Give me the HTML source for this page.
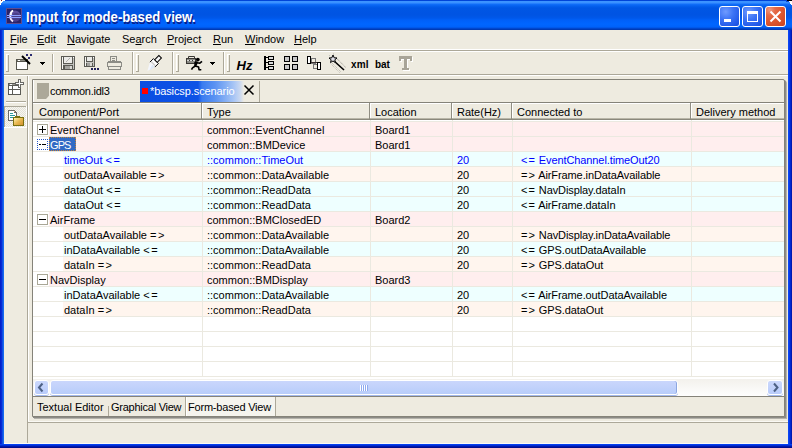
<!DOCTYPE html>
<html><head><meta charset="utf-8">
<style>
*{box-sizing:border-box;margin:0;padding:0}
html,body{width:792px;height:448px;overflow:hidden;background:#eeebe0}
body{position:relative;font-family:"Liberation Sans",sans-serif;font-size:11px;color:#000}
.a{position:absolute}
.t{position:absolute;white-space:pre;line-height:13px}
/* title bar */
#title{left:0;top:0;width:792px;height:30px;
 background:linear-gradient(to bottom,#0044d8 0px,#0044d8 1px,#3d94ff 1px,#3a90ff 3px,#126ffa 4px,#0560ee 6px,#0056e4 8px,#0054e3 15px,#0058ea 18px,#0060f8 20px,#0066ff 24px,#0062fa 27px,#0050dc 28px,#003ec0 29px,#0036a8 30px)}
#ttext{left:26px;top:9px;color:#fff;font-weight:bold;font-size:13px;line-height:16px;text-shadow:1px 1px 0 #0a1e8a;transform:scale(1.01,1.12);transform-origin:0 0}
.wb{position:absolute;top:6px;width:21px;height:21px;border:1px solid #fff;border-radius:3px;
 background:radial-gradient(circle at 30% 25%,#6f9bff 0,#3d74f5 40%,#2158e8 80%,#1a4fd8 100%)}
.frameL{left:0;top:30px;width:4px;height:418px;background:linear-gradient(to right,#0019c6,#0831d9 2px,#166aee 3px)}
.frameR{left:788px;top:30px;width:4px;height:418px;background:linear-gradient(to right,#0a4af6 0,#0a40f0 1px,#0030e0 2px,#0020c0 3px,#0010a0 4px)}
.frameB{left:0;top:444px;width:792px;height:4px;background:linear-gradient(to bottom,#0a48f8 0,#0038e8 1px,#0020c0 2px,#00109a 3px,#000880 4px)}
/* menu */
.mi{position:absolute;top:33px;white-space:pre;line-height:13px}
.u{text-decoration:underline}
/* table */
.hd{position:absolute;top:106px;height:13px;line-height:13px;padding-left:6px;white-space:pre}
.row{position:absolute;left:33px;width:752px;height:15px}
.cell{position:absolute;top:1px;white-space:pre;line-height:13px}
.vl{position:absolute;top:120px;width:1px;height:259px;background:#ebe9e0}
</style></head>
<body>
<!-- Title bar -->
<div id="title" class="a"></div>
<div class="a" style="left:0;top:0;width:5px;height:1px;background:#fff"></div>
<div class="a" style="left:1px;top:0;width:1px;height:1px;background:#802020"></div>
<div class="a" style="left:0;top:1px;width:3px;height:1px;background:#fff"></div>
<div class="a" style="left:0;top:2px;width:2px;height:1px;background:#fff"></div>
<div class="a" style="left:0;top:3px;width:1px;height:2px;background:#fff"></div>
<div class="a" style="left:787px;top:0;width:5px;height:1px;background:#000"></div>
<div class="a" style="left:789px;top:1px;width:3px;height:1px;background:#fff"></div>
<div class="a" style="left:790px;top:2px;width:2px;height:2px;background:#fff"></div>
<div class="a" style="left:791px;top:4px;width:1px;height:1px;background:#fff"></div>
<div class="a" style="left:786px;top:1px;width:3px;height:1px;background:#0a4ad8"></div>
<!-- app icon -->
<svg class="a" style="left:6px;top:8px" width="16" height="16" viewBox="0 0 16 16">
 <rect x="0" y="0" width="16" height="16" fill="#3c3478"/>
 <rect x="0.5" y="0.5" width="15" height="15" fill="#2a2268" stroke="#5c4c90" stroke-width="1"/>
 <circle cx="9" cy="8" r="5.5" fill="#5e4e9c"/>
 <circle cx="10" cy="9" r="4" fill="#4a3c86"/>
 <path d="M7 2.5 C3.5 4 3 11 7 13.5" stroke="#f4e8ff" stroke-width="1.8" fill="none"/>
 <path d="M7 2.5 C5 4 4.5 6 5 8" stroke="#ffffff" stroke-width="1.4" fill="none"/>
 <rect x="1" y="7" width="14" height="1" fill="#8ea0ff"/>
 <rect x="1" y="9" width="14" height="1" fill="#8ea0ff"/>
</svg>
<div id="ttext" class="t">Input for mode-based view.</div>
<!-- window buttons -->
<div class="wb" style="left:719px"><div class="a" style="left:4px;top:12px;width:7px;height:3px;background:#fff"></div></div>
<div class="wb" style="left:742px"><div class="a" style="left:4px;top:4px;width:11px;height:11px;border:1px solid #fff;border-top-width:3px"></div></div>
<div class="wb" style="left:765px;background:radial-gradient(circle at 20% 15%,#f09a80 0,#e46a46 25%,#e05a32 50%,#d04a24 85%,#c04020 100%)">
 <svg class="a" style="left:0;top:0" width="19" height="19" viewBox="0 0 19 19"><path d="M4.5 4.5L14.5 14.5M14.5 4.5L4.5 14.5" stroke="#fff" stroke-width="2"/></svg>
</div>
<div class="a frameL"></div>
<div class="a frameR"></div>
<div class="a frameB"></div>

<!-- Menu bar -->
<div class="mi" style="left:10px"><span class="u">F</span>ile</div>
<div class="mi" style="left:37px"><span class="u">E</span>dit</div>
<div class="mi" style="left:67px"><span class="u">N</span>avigate</div>
<div class="mi" style="left:122px">Se<span class="u">a</span>rch</div>
<div class="mi" style="left:167px"><span class="u">P</span>roject</div>
<div class="mi" style="left:213px"><span class="u">R</span>un</div>
<div class="mi" style="left:245px"><span class="u">W</span>indow</div>
<div class="mi" style="left:294px"><span class="u">H</span>elp</div>
<div class="a" style="left:4px;top:49px;width:784px;height:1px;background:#fff"></div>
<div class="a" style="left:4px;top:50px;width:784px;height:1px;background:#aca899"></div>
<div class="a" style="left:4px;top:51px;width:784px;height:1px;background:#fff"></div>

<!-- toolbar -->
<div class="a" style="left:4px;top:74px;width:784px;height:1px;background:#aca899"></div>
<div class="a" style="left:4px;top:75px;width:784px;height:1px;background:#fff"></div>
<!--TOOLBAR-->
<svg class="a" style="left:0;top:0" width="792" height="80" viewBox="0 0 792 80">
 <g shape-rendering="crispEdges">
  <!-- handles -->
  <rect x="6" y="54" width="1" height="18" fill="#fff"/><rect x="6" y="54" width="3" height="1" fill="#fff"/><rect x="8" y="55" width="1" height="17" fill="#aca899"/><rect x="6" y="71" width="3" height="1" fill="#aca899"/>
  <rect x="136" y="54" width="1" height="18" fill="#fff"/><rect x="136" y="54" width="3" height="1" fill="#fff"/><rect x="138" y="55" width="1" height="17" fill="#aca899"/><rect x="136" y="71" width="3" height="1" fill="#aca899"/>
  <rect x="176" y="54" width="1" height="18" fill="#fff"/><rect x="176" y="54" width="3" height="1" fill="#fff"/><rect x="178" y="55" width="1" height="17" fill="#aca899"/><rect x="176" y="71" width="3" height="1" fill="#aca899"/>
  <rect x="227" y="54" width="1" height="18" fill="#fff"/><rect x="227" y="54" width="3" height="1" fill="#fff"/><rect x="229" y="55" width="1" height="17" fill="#aca899"/><rect x="227" y="71" width="3" height="1" fill="#aca899"/>
  <!-- coolbar separators -->
  <rect x="132" y="52" width="1" height="22" fill="#aca899"/><rect x="133" y="52" width="1" height="22" fill="#fff"/>
  <rect x="172" y="52" width="1" height="22" fill="#aca899"/><rect x="173" y="52" width="1" height="22" fill="#fff"/>
  <rect x="223" y="52" width="1" height="22" fill="#aca899"/><rect x="224" y="52" width="1" height="22" fill="#fff"/>
  <!-- toolbar sep -->
  <rect x="52" y="54" width="1" height="18" fill="#aca899"/><rect x="53" y="54" width="1" height="18" fill="#fff"/>
  <!-- new wizard -->
  <rect x="16" y="59" width="12" height="11" fill="#55554c"/>
  <rect x="17" y="62" width="10" height="7" fill="#fff"/>
  <rect x="17" y="60" width="10" height="1" fill="#8a8a80"/>
  <rect x="18" y="60" width="2" height="1" fill="#fff"/>
  <rect x="26" y="54" width="2" height="2" fill="#2a2a70"/><rect x="30" y="54" width="2" height="2" fill="#2a2a70"/><rect x="28" y="57" width="2" height="2" fill="#2a2a70"/>
  <!-- dropdown arrows -->
  <path d="M40 62h5v1h-1v1h-1v1h-1v-1h-1v-1h-1z" fill="#000"/>
  <path d="M210 62h5v1h-1v1h-1v1h-1v-1h-1v-1h-1z" fill="#000"/>
  <!-- save -->
  <rect x="61" y="56" width="14" height="14" fill="#5a5a54"/>
  <rect x="62" y="57" width="1" height="12" fill="#f8f8f4"/>
  <rect x="64" y="57" width="8" height="6" fill="#ebebe8"/>
  <rect x="66" y="61" width="1" height="1" fill="#b0b0ac"/><rect x="67" y="60" width="1" height="1" fill="#b0b0ac"/><rect x="68" y="59" width="1" height="1" fill="#b0b0ac"/><rect x="69" y="58" width="1" height="1" fill="#b0b0ac"/>
  <rect x="73" y="58" width="1" height="11" fill="#c4c4c0"/>
  <rect x="73" y="57" width="1" height="1" fill="#fff"/>
  <rect x="63" y="64" width="10" height="1" fill="#c4c4c0"/>
  <rect x="65" y="66" width="5" height="3" fill="#a4a4a0"/>
  <rect x="70" y="66" width="2" height="3" fill="#d8d8d4"/>
  <!-- save all -->
  <rect x="84" y="56" width="11" height="11" fill="#5a5a54"/>
  <rect x="85" y="57" width="1" height="9" fill="#f8f8f4"/>
  <rect x="87" y="57" width="5" height="4" fill="#ebebe8"/>
  <rect x="93" y="58" width="1" height="8" fill="#c4c4c0"/>
  <rect x="93" y="57" width="1" height="1" fill="#fff"/>
  <rect x="86" y="62" width="7" height="1" fill="#c4c4c0"/>
  <rect x="87" y="63" width="3" height="3" fill="#a4a4a0"/><rect x="90" y="63" width="2" height="3" fill="#d8d8d4"/>
  <rect x="91" y="68" width="2" height="2" fill="#22225a"/><rect x="94" y="68" width="2" height="2" fill="#22225a"/><rect x="97" y="68" width="2" height="2" fill="#22225a"/>
  <!-- print -->
  <rect x="110" y="56" width="7" height="1" fill="#8c8c86"/><rect x="110" y="56" width="1" height="6" fill="#8c8c86"/><rect x="116" y="57" width="1" height="5" fill="#8c8c86"/>
  <rect x="112" y="58" width="3" height="1" fill="#8c8c86"/><rect x="112" y="60" width="3" height="1" fill="#8c8c86"/>
  <rect x="108" y="61" width="13" height="1" fill="#8c8c86"/>
  <rect x="107" y="62" width="15" height="1" fill="#8c8c86"/><rect x="107" y="62" width="1" height="5" fill="#8c8c86"/><rect x="121" y="62" width="1" height="5" fill="#8c8c86"/>
  <rect x="107" y="66" width="15" height="1" fill="#8c8c86"/>
  <rect x="108" y="67" width="1" height="3" fill="#8c8c86"/><rect x="120" y="67" width="1" height="3" fill="#8c8c86"/><rect x="108" y="69" width="13" height="1" fill="#8c8c86"/>
  <!-- tree icon -->
  <rect x="264" y="56" width="2" height="14" fill="#000"/>
  <rect x="266" y="57" width="2" height="1" fill="#000"/><rect x="266" y="62" width="2" height="1" fill="#000"/><rect x="266" y="67" width="2" height="1" fill="#000"/>
  <rect x="268" y="56" width="6" height="4" fill="#000"/><rect x="269" y="57" width="4" height="2" fill="#ddd"/>
  <rect x="268" y="61" width="6" height="4" fill="#000"/><rect x="269" y="62" width="4" height="2" fill="#ddd"/>
  <rect x="268" y="66" width="6" height="4" fill="#000"/><rect x="269" y="67" width="4" height="2" fill="#ddd"/>
  <!-- grid icon -->
  <rect x="284" y="56" width="6" height="6" fill="#000"/><rect x="285" y="57" width="4" height="4" fill="#c8c8c8"/>
  <rect x="292" y="56" width="6" height="6" fill="#000"/><rect x="293" y="57" width="4" height="4" fill="#c8c8c8"/>
  <rect x="284" y="64" width="6" height="6" fill="#000"/><rect x="285" y="65" width="4" height="4" fill="#c8c8c8"/>
  <rect x="292" y="64" width="6" height="6" fill="#000"/><rect x="293" y="65" width="4" height="4" fill="#c8c8c8"/>
  <!-- diagram icon -->
  <rect x="311" y="58" width="4" height="5" fill="none" stroke="#777" stroke-width="1"/>
  <rect x="313" y="64" width="4" height="4" fill="none" stroke="#777" stroke-width="1"/>
  <rect x="310" y="62" width="8" height="1" fill="#3a3030"/>
  <rect x="307" y="56" width="4" height="8" fill="#000"/><rect x="308" y="57" width="2" height="6" fill="#fff"/>
  <rect x="317" y="62" width="4" height="8" fill="#000"/><rect x="318" y="63" width="2" height="6" fill="#fff"/>
 </g>
 <!-- pen -->
 <g transform="translate(154.5 62.5) rotate(-45)">
  <path d="M-11 1 L-3 -3.5 L-3 3.5 Z" fill="#f4f6fc"/>
  <path d="M-9 2 L-3 0 L-3 3.5 Z" fill="#dde7f6"/>
  <path d="M-3 -3.5 H2 V3.5 H-3" fill="#fff" stroke="#000" stroke-width="0.9"/>
  <rect x="-2.5" y="-3" width="1.5" height="6" fill="#d0d0d0"/>
  <rect x="2" y="-1.8" width="6" height="3.6" fill="#f4f4f4" stroke="#000" stroke-width="1"/>
 </g>
 <!-- wand on new -->
 <path d="M22 56 L30 64" stroke="#000" stroke-width="2"/>
 <!-- runner -->
 <rect x="186.5" y="58.5" width="9" height="5" fill="#8a8a84" stroke="#3a3834" stroke-width="1"/>
 <path d="M188.5 58.5 V56.5 H194.5 V58.5" fill="none" stroke="#3a3834" stroke-width="1"/>
 <rect x="187" y="60" width="8" height="1" fill="#d8d8d4"/>
 <rect x="189" y="60" width="1" height="1" fill="#333"/><rect x="192" y="60" width="1" height="1" fill="#333"/>
 <circle cx="197.8" cy="59.6" r="1.9" fill="#000"/>
 <path d="M197 61.5 L195 66" stroke="#000" stroke-width="2.6" fill="none"/>
 <path d="M195.3 66 L192.5 67.8 L191.5 69.6 M195.3 66 L198.6 67 L199 69.6 L201.3 69.8 M197 62.8 L199.8 63.2 L202 61.3 M196.6 62.3 L194.3 63" stroke="#000" stroke-width="1.6" fill="none" stroke-linejoin="round"/>
 <!-- Hz -->
 <text x="236.5" y="69.5" font-family="Liberation Sans" font-weight="bold" font-style="italic" font-size="13" fill="#000" letter-spacing="0">Hz</text>
 <!-- magic wand -->
 <path d="M330.5 63.5 L339.5 72.5 M332 63 L341 72 M337 59 L346 68 M336 57.5 L345 66.5 M329 56 L330 55 M333 54 L335 54" stroke="#b4b2aa" stroke-width="1" stroke-dasharray="1 1"/>
 <path d="M333.5 60.5 L344 70" stroke="#000" stroke-width="1.6"/>
 <path d="M333 55 L334.2 57.8 L337 58 L334.8 59.8 L335.5 62.5 L333 61 L330.5 62.5 L331.2 59.8 L329 58 L331.8 57.8 Z" fill="#e0e0e8" stroke="#000" stroke-width="1"/>
 <!-- xml bat -->
 <text x="351" y="67.5" font-family="Liberation Sans" font-weight="bold" font-size="10" fill="#000" letter-spacing="0.2">xml</text>
 <text x="375" y="67.5" font-family="Liberation Sans" font-weight="bold" font-size="10" fill="#000" letter-spacing="-0.1">bat</text>
 <!-- T -->
 <path d="M400 57h13v5h-2v-2h-3v9h2v2h-7v-2h2v-9h-3v2h-2z" fill="#fff" shape-rendering="crispEdges"/>
 <path d="M399 56h13v5h-2v-2h-3v9h2v2h-7v-2h2v-9h-3v2h-2z" fill="#a8a498" shape-rendering="crispEdges"/>
</svg>

<!--/TOOLBAR-->

<!-- left trim -->
<div class="a" style="left:27px;top:76px;width:1px;height:367px;background:#aca899"></div>
<div class="a" style="left:28px;top:76px;width:1px;height:346px;background:#fff"></div>
<!--TRIM-->
<svg class="a" style="left:0;top:0" width="30" height="130" viewBox="0 0 30 130">
 <defs>
  <pattern id="chk" width="2" height="2" patternUnits="userSpaceOnUse"><rect width="2" height="2" fill="#f7f6f1"/><rect width="1" height="1" fill="#e4e2d8"/><rect x="1" y="1" width="1" height="1" fill="#e4e2d8"/></pattern>
  <linearGradient id="fold" x1="0" y1="0" x2="1" y2="1"><stop offset="0" stop-color="#fff2b0"/><stop offset="0.5" stop-color="#e8b850"/><stop offset="1" stop-color="#d09030"/></linearGradient>
 </defs>
 <g shape-rendering="crispEdges">
  <!-- icon 1 -->
  <rect x="8" y="83" width="13" height="12" fill="#5a5a55"/>
  <rect x="9" y="86" width="11" height="8" fill="#fff"/>
  <rect x="9" y="84" width="11" height="1" fill="#9a9a94"/><rect x="10" y="84" width="2" height="1" fill="#fff"/>
  <rect x="12" y="86" width="1" height="8" fill="#5a5a55"/>
  <rect x="9" y="89" width="11" height="1" fill="#5a5a55"/>
  <rect x="18" y="79" width="3" height="9" fill="#6a6a66"/><rect x="15" y="82" width="9" height="3" fill="#6a6a66"/>
  <rect x="19" y="80" width="1" height="7" fill="#fff"/><rect x="16" y="83" width="7" height="1" fill="#fff"/>
  <!-- separator -->
  <rect x="6" y="101" width="20" height="1" fill="#aca899"/><rect x="6" y="102" width="20" height="1" fill="#fff"/>
  <!-- pressed toggle -->
  <rect x="5" y="106" width="21" height="21" fill="url(#chk)"/>
  <rect x="4" y="106" width="22" height="1" fill="#aca899"/><rect x="4" y="106" width="1" height="21" fill="#aca899"/>
  <rect x="26" y="106" width="1" height="21" fill="#fff"/><rect x="4" y="127" width="23" height="1" fill="#fff"/>
  <!-- doc -->
  <path d="M8 110h6l3 3v8h-9z" fill="#6a6a66"/>
  <path d="M9 111h5v2h2v7h-7z" fill="#fff"/>
  <rect x="14" y="111" width="1" height="1" fill="#f0c080"/>
  <rect x="10" y="113" width="3" height="1" fill="#2a9a9a"/><rect x="10" y="115" width="5" height="1" fill="#2a9a9a"/><rect x="10" y="117" width="4" height="1" fill="#2a9a9a"/>
  <!-- folder -->
  <rect x="13" y="117" width="11" height="9" fill="#7a7010"/>
  <rect x="15" y="116" width="5" height="2" fill="#7a7010"/>
  <rect x="14" y="118" width="9" height="7" fill="url(#fold)"/>
 </g>
</svg>

<!--/TRIM-->

<!-- editor pane -->
<div class="a" style="left:32px;top:79px;width:753px;height:338px;border:1px solid #858379;background:#eeebe0;box-shadow:1px 1px 0 #8c8b86,2px 2px 0 #b4b2aa;border-radius:0 2px 0 0"></div>
<div class="a" style="left:33px;top:80px;width:1px;height:22px;background:#fff"></div>
<!-- tabs -->
<div class="a" style="left:33px;top:102px;width:751px;height:1px;background:#858379"></div>
<div class="a" style="left:37px;top:83px;width:12px;height:16px;background:#aca899;clip-path:polygon(0 0,100% 0,100% 80%,75% 100%,0 100%)"></div>
<div class="t" style="left:50px;top:85px;letter-spacing:-0.25px">common.idl3</div>
<div class="a" style="left:259px;top:81px;width:1px;height:21px;background:#aca899"></div>
<div class="a" style="left:140px;top:81px;width:119px;height:21px;background:linear-gradient(to right,#0a4ee2 0,#0d52e6 58px,#3a7cf0 62px,#5b93f2 75px,#86b0f4 86px,#a9c6f5 94px,#cad8f0 100px,#e4e6e6 103px,#eeebe0 104px)"></div>
<div class="a" style="left:142px;top:88px;width:6px;height:6px;background:#f00"></div>
<div class="t" style="left:150px;top:85px;color:#fff;letter-spacing:-0.1px">*basicsp.scenario</div>
<svg class="a" style="left:243px;top:84px" width="12" height="12" viewBox="0 0 12 12"><path d="M1.5 1.5L10.5 10.5M10.5 1.5L1.5 10.5" stroke="#000" stroke-width="1.5"/></svg>

<!-- table -->
<div class="a" style="left:33px;top:103px;width:751px;height:277px;background:#fff"></div>
<div class="a" style="left:33px;top:103px;width:751px;height:17px;background:#eeebe0;border-top:1px solid #fff;border-bottom:2px solid #8a887c"></div>
<div class="a" style="left:33px;top:118px;width:751px;height:1px;background:#b9b6a8"></div>
<div class="hd" style="left:33px">Component/Port</div>
<div class="hd" style="left:201px">Type</div>
<div class="hd" style="left:369px">Location</div>
<div class="hd" style="left:451px">Rate(Hz)</div>
<div class="hd" style="left:511px">Connected to</div>
<div class="hd" style="left:690px">Delivery method</div>
<div class="a" style="left:201px;top:103px;width:1px;height:16px;background:#8f8d82"></div><div class="a" style="left:202px;top:104px;width:1px;height:14px;background:#fff"></div>
<div class="a" style="left:369px;top:103px;width:1px;height:16px;background:#8f8d82"></div><div class="a" style="left:370px;top:104px;width:1px;height:14px;background:#fff"></div>
<div class="a" style="left:451px;top:103px;width:1px;height:16px;background:#8f8d82"></div><div class="a" style="left:452px;top:104px;width:1px;height:14px;background:#fff"></div>
<div class="a" style="left:511px;top:103px;width:1px;height:16px;background:#8f8d82"></div><div class="a" style="left:512px;top:104px;width:1px;height:14px;background:#fff"></div>
<div class="a" style="left:690px;top:103px;width:1px;height:16px;background:#8f8d82"></div><div class="a" style="left:691px;top:104px;width:1px;height:14px;background:#fff"></div>
<!--ROWS-->
<div class="a" style="left:49px;top:122px;width:735px;height:14px;background:#ffeeee"></div>
<div class="cell" style="left:50px;top:124px;color:#000">EventChannel</div>
<div class="a" style="left:37px;top:124px;width:11px;height:11px;border:1px solid #a9a796;background:#fff"></div>
<div class="a" style="left:39px;top:129px;width:7px;height:1px;background:#000"></div>
<div class="a" style="left:42px;top:126px;width:1px;height:7px;background:#000"></div>
<div class="cell" style="left:207px;top:124px;color:#000">common::EventChannel</div>
<div class="cell" style="left:375px;top:124px;color:#000">Board1</div>
<div class="a" style="left:49px;top:137px;width:735px;height:14px;background:#ffeeee"></div>
<div class="a" style="left:49px;top:137px;width:27px;height:14px;background:#316ac5;outline:1px dotted #c08040;outline-offset:-1px"></div>
<div class="cell" style="left:50px;top:139px;color:#fff;letter-spacing:-0.9px">GPS</div>
<div class="a" style="left:37px;top:139px;width:11px;height:11px;border:1px dotted #2858c8;background:#fff"></div>
<div class="a" style="left:39px;top:144px;width:7px;height:1px;background:repeating-linear-gradient(to right,#000 0,#000 2px,#fff 2px,#fff 2.5px)"></div>
<div class="cell" style="left:207px;top:139px;color:#000">common::BMDevice</div>
<div class="cell" style="left:375px;top:139px;color:#000">Board1</div>
<div class="a" style="left:63px;top:152px;width:721px;height:14px;background:#eeffff"></div>
<div class="cell" style="left:64px;top:154px;color:#0000ff">timeOut <span style="letter-spacing:1.5px">&lt;=</span></div>
<div class="cell" style="left:207px;top:154px;color:#0000ff">::common::TimeOut</div>
<div class="cell" style="left:457px;top:154px;color:#0000ff">20</div>
<div class="cell" style="left:521px;top:154px;color:#0000ff"><span style="letter-spacing:1px">&lt;=</span><span style="letter-spacing:-0.1px"> EventChannel.timeOut20</span></div>
<div class="a" style="left:63px;top:167px;width:721px;height:14px;background:#fff5ee"></div>
<div class="cell" style="left:64px;top:169px;color:#000">outDataAvailable <span style="letter-spacing:1.5px">=&gt;</span></div>
<div class="cell" style="left:207px;top:169px;color:#000">::common::DataAvailable</div>
<div class="cell" style="left:457px;top:169px;color:#000">20</div>
<div class="cell" style="left:521px;top:169px;color:#000"><span style="letter-spacing:1px">=&gt;</span><span style="letter-spacing:-0.1px"> AirFrame.inDataAvailable</span></div>
<div class="a" style="left:63px;top:182px;width:721px;height:14px;background:#eeffff"></div>
<div class="cell" style="left:64px;top:184px;color:#000">dataOut <span style="letter-spacing:1.5px">&lt;=</span></div>
<div class="cell" style="left:207px;top:184px;color:#000">::common::ReadData</div>
<div class="cell" style="left:457px;top:184px;color:#000">20</div>
<div class="cell" style="left:521px;top:184px;color:#000"><span style="letter-spacing:1px">&lt;=</span><span style="letter-spacing:-0.1px"> NavDisplay.dataIn</span></div>
<div class="a" style="left:63px;top:197px;width:721px;height:14px;background:#eeffff"></div>
<div class="cell" style="left:64px;top:199px;color:#000">dataOut <span style="letter-spacing:1.5px">&lt;=</span></div>
<div class="cell" style="left:207px;top:199px;color:#000">::common::ReadData</div>
<div class="cell" style="left:457px;top:199px;color:#000">20</div>
<div class="cell" style="left:521px;top:199px;color:#000"><span style="letter-spacing:1px">&lt;=</span><span style="letter-spacing:-0.1px"> AirFrame.dataIn</span></div>
<div class="a" style="left:49px;top:212px;width:735px;height:14px;background:#ffeeee"></div>
<div class="cell" style="left:50px;top:214px;color:#000">AirFrame</div>
<div class="a" style="left:37px;top:214px;width:11px;height:11px;border:1px solid #a9a796;background:#fff"></div>
<div class="a" style="left:39px;top:219px;width:7px;height:1px;background:#000"></div>
<div class="cell" style="left:207px;top:214px;color:#000">common::BMClosedED</div>
<div class="cell" style="left:375px;top:214px;color:#000">Board2</div>
<div class="a" style="left:63px;top:227px;width:721px;height:14px;background:#fff5ee"></div>
<div class="cell" style="left:64px;top:229px;color:#000">outDataAvailable <span style="letter-spacing:1.5px">=&gt;</span></div>
<div class="cell" style="left:207px;top:229px;color:#000">::common::DataAvailable</div>
<div class="cell" style="left:457px;top:229px;color:#000">20</div>
<div class="cell" style="left:521px;top:229px;color:#000"><span style="letter-spacing:1px">=&gt;</span><span style="letter-spacing:-0.1px"> NavDisplay.inDataAvailable</span></div>
<div class="a" style="left:63px;top:242px;width:721px;height:14px;background:#eeffff"></div>
<div class="cell" style="left:64px;top:244px;color:#000">inDataAvailable <span style="letter-spacing:1.5px">&lt;=</span></div>
<div class="cell" style="left:207px;top:244px;color:#000">::common::DataAvailable</div>
<div class="cell" style="left:457px;top:244px;color:#000">20</div>
<div class="cell" style="left:521px;top:244px;color:#000"><span style="letter-spacing:1px">&lt;=</span><span style="letter-spacing:-0.1px"> GPS.outDataAvailable</span></div>
<div class="a" style="left:63px;top:257px;width:721px;height:14px;background:#fff5ee"></div>
<div class="cell" style="left:64px;top:259px;color:#000">dataIn <span style="letter-spacing:1.5px">=&gt;</span></div>
<div class="cell" style="left:207px;top:259px;color:#000">::common::ReadData</div>
<div class="cell" style="left:457px;top:259px;color:#000">20</div>
<div class="cell" style="left:521px;top:259px;color:#000"><span style="letter-spacing:1px">=&gt;</span><span style="letter-spacing:-0.1px"> GPS.dataOut</span></div>
<div class="a" style="left:49px;top:272px;width:735px;height:14px;background:#ffeeee"></div>
<div class="cell" style="left:50px;top:274px;color:#000">NavDisplay</div>
<div class="a" style="left:37px;top:274px;width:11px;height:11px;border:1px solid #a9a796;background:#fff"></div>
<div class="a" style="left:39px;top:279px;width:7px;height:1px;background:#000"></div>
<div class="cell" style="left:207px;top:274px;color:#000">common::BMDisplay</div>
<div class="cell" style="left:375px;top:274px;color:#000">Board3</div>
<div class="a" style="left:63px;top:287px;width:721px;height:14px;background:#eeffff"></div>
<div class="cell" style="left:64px;top:289px;color:#000">inDataAvailable <span style="letter-spacing:1.5px">&lt;=</span></div>
<div class="cell" style="left:207px;top:289px;color:#000">::common::DataAvailable</div>
<div class="cell" style="left:457px;top:289px;color:#000">20</div>
<div class="cell" style="left:521px;top:289px;color:#000"><span style="letter-spacing:1px">&lt;=</span><span style="letter-spacing:-0.1px"> AirFrame.outDataAvailable</span></div>
<div class="a" style="left:63px;top:302px;width:721px;height:14px;background:#fff5ee"></div>
<div class="cell" style="left:64px;top:304px;color:#000">dataIn <span style="letter-spacing:1.5px">=&gt;</span></div>
<div class="cell" style="left:207px;top:304px;color:#000">::common::ReadData</div>
<div class="cell" style="left:457px;top:304px;color:#000">20</div>
<div class="cell" style="left:521px;top:304px;color:#000"><span style="letter-spacing:1px">=&gt;</span><span style="letter-spacing:-0.1px"> GPS.dataOut</span></div>
<div class="a" style="left:33px;top:121px;width:751px;height:1px;background:#ebe9e0"></div>
<div class="a" style="left:33px;top:136px;width:751px;height:1px;background:#ebe9e0"></div>
<div class="a" style="left:33px;top:151px;width:751px;height:1px;background:#ebe9e0"></div>
<div class="a" style="left:33px;top:166px;width:751px;height:1px;background:#ebe9e0"></div>
<div class="a" style="left:33px;top:181px;width:751px;height:1px;background:#ebe9e0"></div>
<div class="a" style="left:33px;top:196px;width:751px;height:1px;background:#ebe9e0"></div>
<div class="a" style="left:33px;top:211px;width:751px;height:1px;background:#ebe9e0"></div>
<div class="a" style="left:33px;top:226px;width:751px;height:1px;background:#ebe9e0"></div>
<div class="a" style="left:33px;top:241px;width:751px;height:1px;background:#ebe9e0"></div>
<div class="a" style="left:33px;top:256px;width:751px;height:1px;background:#ebe9e0"></div>
<div class="a" style="left:33px;top:271px;width:751px;height:1px;background:#ebe9e0"></div>
<div class="a" style="left:33px;top:286px;width:751px;height:1px;background:#ebe9e0"></div>
<div class="a" style="left:33px;top:301px;width:751px;height:1px;background:#ebe9e0"></div>
<div class="a" style="left:33px;top:316px;width:751px;height:1px;background:#ebe9e0"></div>
<div class="a" style="left:33px;top:331px;width:751px;height:1px;background:#ebe9e0"></div>
<div class="a" style="left:33px;top:346px;width:751px;height:1px;background:#ebe9e0"></div>
<div class="a" style="left:33px;top:361px;width:751px;height:1px;background:#ebe9e0"></div>
<div class="a" style="left:33px;top:376px;width:751px;height:1px;background:#ebe9e0"></div>
<div class="a" style="left:202px;top:120px;width:1px;height:257px;background:#ebe9e0"></div>
<div class="a" style="left:370px;top:120px;width:1px;height:257px;background:#ebe9e0"></div>
<div class="a" style="left:452px;top:120px;width:1px;height:257px;background:#ebe9e0"></div>
<div class="a" style="left:512px;top:120px;width:1px;height:257px;background:#ebe9e0"></div>
<div class="a" style="left:691px;top:120px;width:1px;height:257px;background:#ebe9e0"></div>

<!--/ROWS-->
<!-- scrollbar -->
<div class="a" style="left:33px;top:379px;width:751px;height:17px;background:linear-gradient(to bottom,#f3f1ec,#fefefe)"></div>
<div class="a" style="left:34px;top:380px;width:15px;height:15px;border:1px solid #fff;border-radius:3px;background:linear-gradient(to bottom,#cbd8fc,#b9ccfa);box-shadow:0 1px 0 #a3b9ec"></div>
<svg class="a" style="left:34px;top:380px" width="15" height="15" viewBox="0 0 15 15"><path d="M8.5 3.5L5 7.5L8.5 11.5" stroke="#4d6185" stroke-width="2" fill="none"/></svg>
<div class="a" style="left:50px;top:380px;width:628px;height:15px;border:1px solid #fff;border-radius:3px;background:linear-gradient(to bottom,#cad6fc,#b8cdfa);box-shadow:inset -1px 0 0 #8ca6e0,0 1px 0 #a3b9ec"></div>
<div class="a" style="left:360px;top:385px;width:8px;height:6px;background:repeating-linear-gradient(to right,#fff 0,#fff 1px,#8faaf0 1px,#8faaf0 2px)"></div>
<div class="a" style="left:767px;top:380px;width:16px;height:15px;border:1px solid #fff;border-radius:3px;background:linear-gradient(to bottom,#cbd8fc,#b9ccfa);box-shadow:0 1px 0 #a3b9ec"></div>
<svg class="a" style="left:768px;top:380px" width="15" height="15" viewBox="0 0 15 15"><path d="M6 3.5L9.5 7.5L6 11.5" stroke="#4d6185" stroke-width="2" fill="none"/></svg>
<div class="a" style="left:33px;top:396px;width:751px;height:1px;background:#858379"></div>

<!-- bottom tabs -->
<div class="a" style="left:186px;top:397px;width:90px;height:19px;background:#f5f4ee;border-left:1px solid #fff;border-right:1px solid #aca899"></div>
<div class="a" style="left:185px;top:397px;width:1px;height:19px;background:#aca899"></div>
<div class="a" style="left:108px;top:406px;width:1px;height:10px;background:#aca899"></div>
<div class="t" style="left:37px;top:401px;letter-spacing:0px">Textual Editor</div>
<div class="t" style="left:111px;top:401px;letter-spacing:-0.25px">Graphical View</div>
<div class="t" style="left:188px;top:401px;letter-spacing:-0.2px">Form-based View</div>

<!-- status bar -->
<div class="a" style="left:28px;top:421px;width:760px;height:1px;background:#faf9f4"></div>
<div class="a" style="left:28px;top:422px;width:760px;height:1px;background:#aca899"></div>
<div class="a" style="left:4px;top:443px;width:784px;height:1px;background:#fbfaf5"></div>
</body></html>
